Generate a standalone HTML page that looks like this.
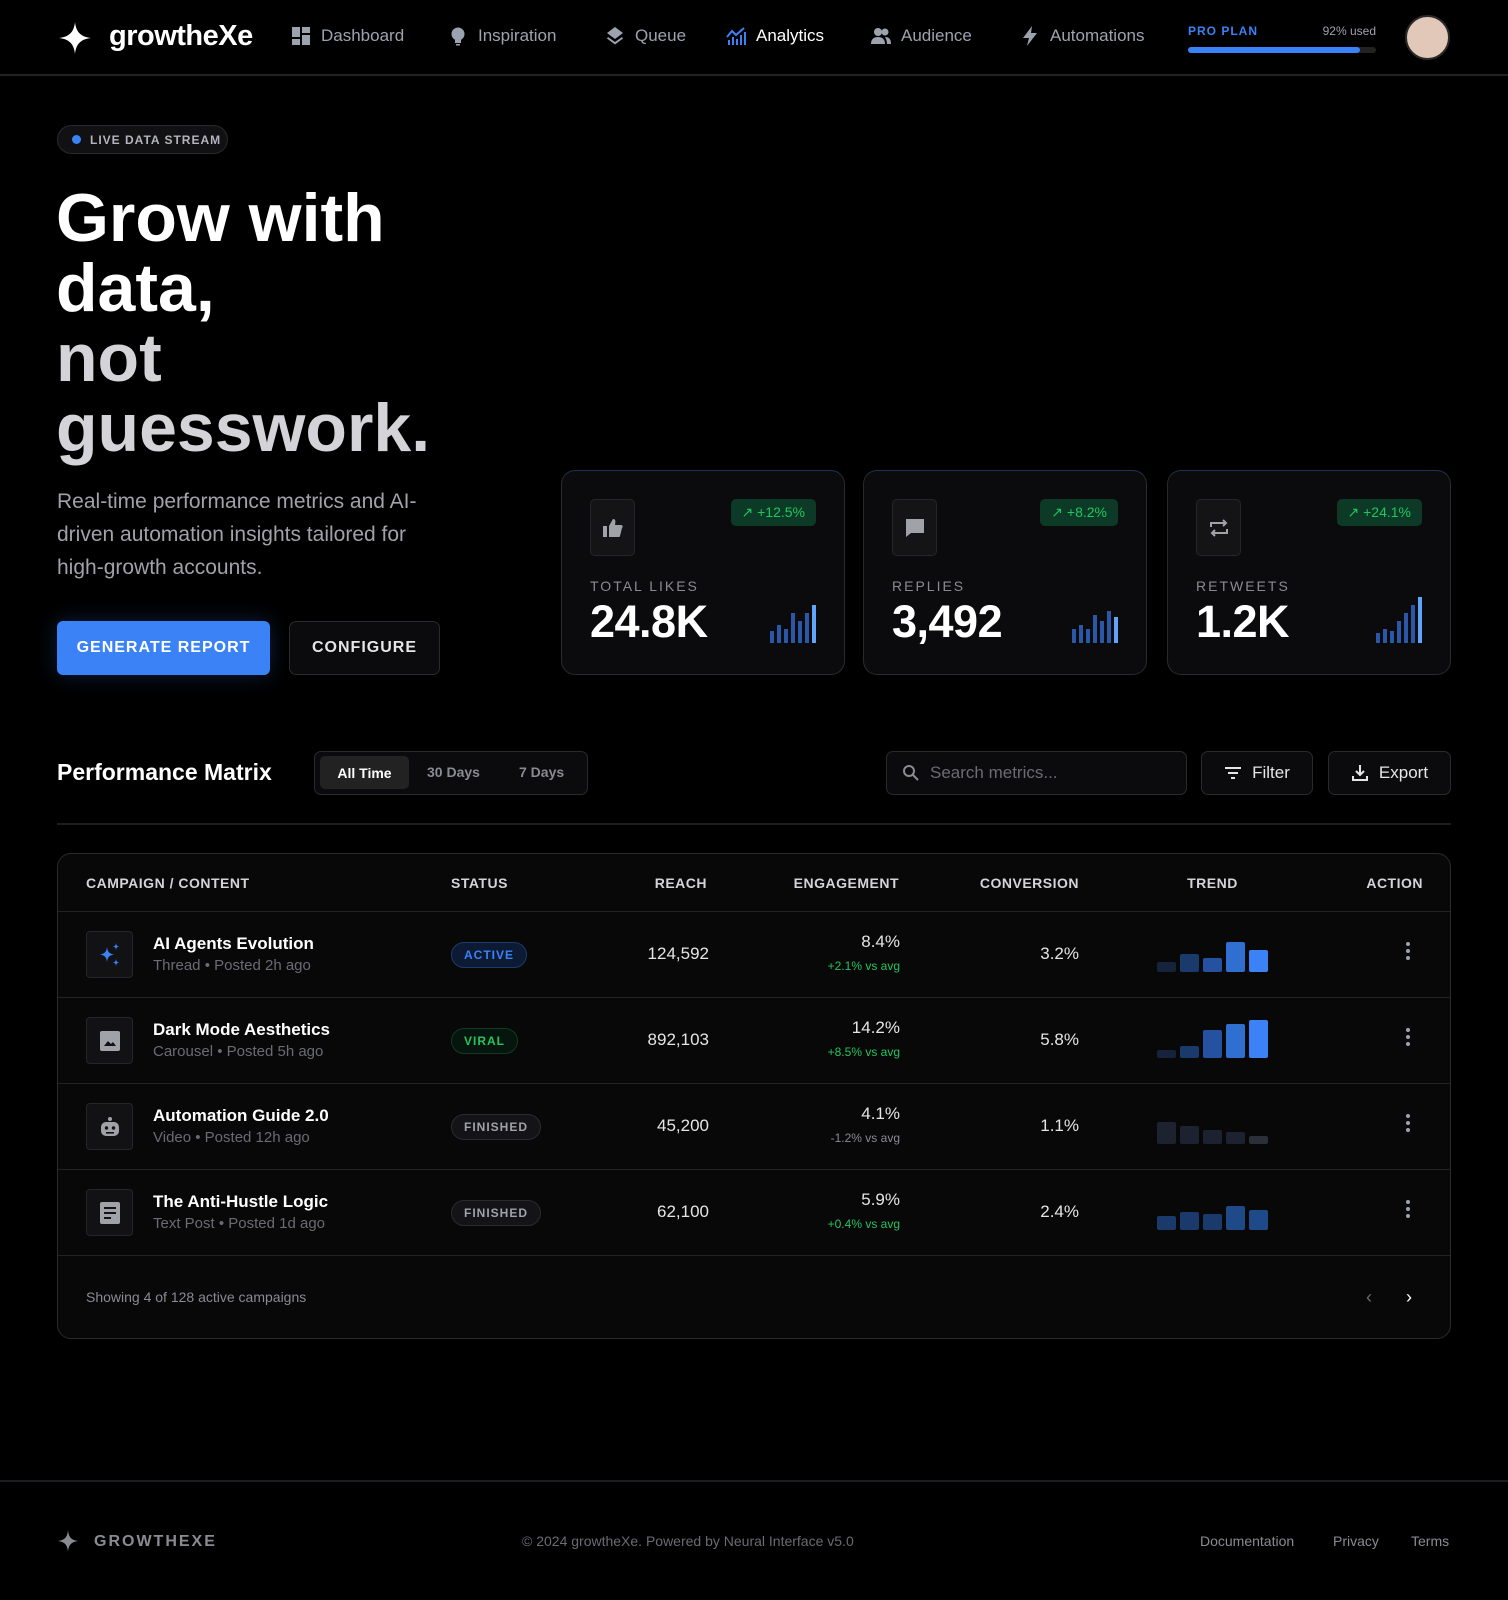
<!DOCTYPE html>
<html><head><meta charset="utf-8"><style>
*{box-sizing:border-box;margin:0;padding:0}
body{width:1508px;height:1600px;background:#000;color:#fff;font-family:"Liberation Sans",sans-serif;position:relative;overflow:hidden}
.abs{position:absolute}
.nav{position:absolute;left:0;top:0;width:1508px;height:76px;border-bottom:2px solid #222}
.ni{position:absolute;top:26px;font-size:17px;color:#9ca3af;display:flex;align-items:center;gap:10px;white-space:nowrap}
.ni svg{width:20px;height:20px}
.card{position:absolute;top:470px;width:284px;height:205px;border:1px solid #2a2a2e;border-radius:14px;background:#0b0b0d;border-top-color:#1e3350}
.ib{position:absolute;left:28px;top:28px;width:45px;height:57px;border:1px solid #26262a;border-radius:5px;background:#141417;display:flex;align-items:center;justify-content:center}
.pill{position:absolute;right:28px;top:28px;height:27px;padding:0 11px;background:#0c3a27;color:#22c55e;border-radius:5px;font-size:14px;display:flex;align-items:center;gap:6px}
.lab{position:absolute;left:28px;top:107px;font-size:14px;letter-spacing:2px;color:#8a8a92}
.val{position:absolute;left:28px;top:125px;font-size:45px;font-weight:bold;letter-spacing:-0.5px}
.bars{position:absolute;right:28px;top:134px;display:flex;align-items:flex-end;gap:3px;height:38px}
.bars i{display:block;width:4px;background:#2a57a8}
.btn{position:absolute;border:1px solid #2a2a2e;border-radius:7px;background:#0b0b0d;display:flex;align-items:center;justify-content:center;gap:10px;font-size:17px;color:#e5e5e5}
.tbl{position:absolute;left:57px;top:853px;width:1394px;height:486px;border:1px solid #2a2a2e;border-radius:14px;background:#080809;overflow:hidden}
.th{position:absolute;top:21px;font-size:14px;font-weight:bold;letter-spacing:0.5px;color:#d4d4d8}
.row{position:absolute;left:0;width:1394px;height:86px;border-top:1px solid #232327}
.ico{position:absolute;left:28px;top:19px;width:47px;height:47px;border:1px solid #26262a;border-radius:4px;background:#121215;display:flex;align-items:center;justify-content:center}
.t1{position:absolute;left:95px;top:22px;font-size:17px;font-weight:bold}
.t2{position:absolute;left:95px;top:45px;font-size:15px;color:#6b6b73}
.st{position:absolute;left:393px;top:30px;height:26px;padding:0 12px;border-radius:13px;font-size:12px;font-weight:bold;letter-spacing:1px;display:flex;align-items:center}
.num{position:absolute;font-size:17px;color:#e5e5e5;text-align:right}
.sub{position:absolute;font-size:12px;text-align:right}
.tr{position:absolute;left:1099px;display:flex;align-items:flex-end;gap:4px;top:20px;height:40px}
.tr i{display:block;width:19px;border-radius:2px}
.dots{position:absolute;left:1348px;top:30px;width:4px}
.dots b{display:block;width:4px;height:4px;border-radius:2px;background:#9ca3af;margin-bottom:3px}
</style></head><body>
<div class="nav">
 <svg class="abs" style="left:57px;top:20px" width="36" height="36" viewBox="0 0 36 36"><path d="M18 2 C19 12 24 17 34 18 C24 19 19 24 18 34 C17 24 12 19 2 18 C12 17 17 12 18 2Z" fill="#fff"/></svg>
 <div class="abs" style="left:109px;top:20px;font-size:29px;font-weight:bold;letter-spacing:-0.5px">growtheXe</div>
 <div class="ni" style="left:291px"><svg viewBox="0 0 20 20" fill="#9ca3af"><rect x="1" y="1" width="8" height="10"/><rect x="11" y="1" width="8" height="6"/><rect x="1" y="13" width="8" height="6"/><rect x="11" y="9" width="8" height="10"/></svg>Dashboard</div>
 <div class="ni" style="left:448px"><svg viewBox="0 0 20 20" fill="#9ca3af"><circle cx="10" cy="8" r="6.5"/><rect x="7" y="14" width="6" height="3"/><rect x="8" y="18" width="4" height="1.5"/></svg>Inspiration</div>
 <div class="ni" style="left:605px"><svg viewBox="0 0 20 20" fill="#9ca3af"><path d="M10 1 L18 7 L10 13 L2 7Z"/><path d="M3 11 L10 16 L17 11 L18 12.5 L10 18.5 L2 12.5Z"/></svg>Queue</div>
 <div class="ni" style="left:726px;color:#fff"><svg viewBox="0 0 20 20" fill="none" stroke="#3b82f6" stroke-width="2"><path d="M1 11 L6 5 L10 9 L18 2"/><path d="M3 19V14M7 19V11M11 19V13M15 19V9M19 19V6"/></svg>Analytics</div>
 <div class="ni" style="left:871px"><svg viewBox="0 0 20 20" fill="#9ca3af"><circle cx="7" cy="6" r="4"/><circle cx="14" cy="6" r="3.5"/><path d="M0 18c0-5 3-7 7-7s7 2 7 7z"/><path d="M14 11c4 0 6 2 6 7h-4c0-3-1-5-2-7z"/></svg>Audience</div>
 <div class="ni" style="left:1020px"><svg viewBox="0 0 20 20" fill="#9ca3af"><path d="M12 0 L3 12 H9 L7 20 L17 7 H11Z"/></svg>Automations</div>
 <div class="abs" style="left:1188px;top:24px;font-size:12px;font-weight:bold;color:#3b82f6;letter-spacing:1px">PRO PLAN</div>
 <div class="abs" style="left:1300px;top:24px;width:76px;text-align:right;font-size:12px;color:#a1a1aa">92% used</div>
 <div class="abs" style="left:1188px;top:47px;width:188px;height:6px;border-radius:3px;background:#222"><div style="width:172px;height:6px;border-radius:3px;background:#3b82f6"></div></div>
 <div class="abs" style="left:1405px;top:15px;width:45px;height:45px;border-radius:50%;background:#e2c8b8;border:2px solid #2a2a2a"></div>
</div>

<div class="abs" style="left:57px;top:125px;width:171px;height:29px;border:1px solid #2a2a2e;border-radius:15px;background:#111114;display:flex;align-items:center;gap:9px;padding-left:14px;font-size:12px;font-weight:bold;letter-spacing:1px;color:#b4b4bc"><span style="width:9px;height:9px;border-radius:50%;background:#3b82f6;display:inline-block"></span>LIVE DATA STREAM</div>
<div class="abs" style="left:56px;top:183px;font-size:68px;font-weight:bold;line-height:70px;letter-spacing:0">Grow with<br>data,<br><span style="color:#d4d4d8">not<br>guesswork.</span></div>
<div class="abs" style="left:57px;top:485px;width:470px;font-size:21px;line-height:33px;color:#a1a1aa;white-space:nowrap">Real-time performance metrics and AI-<br>driven automation insights tailored for<br>high-growth accounts.</div>
<div class="abs" style="left:57px;top:621px;width:213px;height:54px;border-radius:6px;background:#3b82f6;box-shadow:0 0 20px rgba(59,130,246,.25);display:flex;align-items:center;justify-content:center;font-size:16px;font-weight:bold;letter-spacing:1px">GENERATE REPORT</div>
<div class="btn" style="left:289px;top:621px;width:151px;height:54px;font-weight:bold;font-size:16px;letter-spacing:1px">CONFIGURE</div>

<div class="card" style="left:561px"><div class="ib"><svg width="22" height="22" viewBox="0 0 22 22" fill="#a1a1aa"><rect x="1" y="9" width="4" height="11"/><path d="M7 9 L11 2 C13 2 14 3 13 8 H19 C21 8 21 10 20 11 L18 19 C18 20 17 20 16 20 H7Z"/></svg></div><div class="pill">↗ +12.5%</div><div class="lab">TOTAL LIKES</div><div class="val">24.8K</div><div class="bars"><i style="height:12px"></i><i style="height:18px"></i><i style="height:14px"></i><i style="height:30px"></i><i style="height:22px"></i><i style="height:30px"></i><i style="height:38px;background:#60a5fa"></i></div></div>
<div class="card" style="left:863px"><div class="ib"><svg width="22" height="22" viewBox="0 0 22 22" fill="#a1a1aa"><path d="M2 2 H20 V16 H7 L2 20Z"/></svg></div><div class="pill">↗ +8.2%</div><div class="lab">REPLIES</div><div class="val">3,492</div><div class="bars"><i style="height:14px"></i><i style="height:18px"></i><i style="height:14px"></i><i style="height:28px"></i><i style="height:22px"></i><i style="height:32px"></i><i style="height:26px;background:#60a5fa"></i></div></div>
<div class="card" style="left:1167px"><div class="ib"><svg width="22" height="22" viewBox="0 0 22 22" fill="none" stroke="#a1a1aa" stroke-width="2"><path d="M3 10 V6 H18 M15 3 L18 6 L15 9"/><path d="M19 12 V16 H4 M7 13 L4 16 L7 19"/></svg></div><div class="pill">↗ +24.1%</div><div class="lab">RETWEETS</div><div class="val">1.2K</div><div class="bars"><i style="height:10px"></i><i style="height:14px"></i><i style="height:12px"></i><i style="height:22px"></i><i style="height:30px"></i><i style="height:38px"></i><i style="height:46px;background:#60a5fa"></i></div></div>

<div class="abs" style="left:57px;top:759px;font-size:23px;font-weight:bold">Performance Matrix</div>
<div class="abs" style="left:314px;top:751px;width:274px;height:44px;border:1px solid #2a2a2e;border-radius:7px;background:#0b0b0d"></div>
<div class="abs" style="left:320px;top:756px;width:89px;height:33px;border-radius:5px;background:#222;display:flex;align-items:center;justify-content:center;font-size:14px;font-weight:bold">All Time</div>
<div class="abs" style="left:427px;top:764px;font-size:14px;color:#8a8a92;font-weight:bold">30 Days</div>
<div class="abs" style="left:519px;top:764px;font-size:14px;color:#8a8a92;font-weight:bold">7 Days</div>
<div class="btn" style="left:886px;top:751px;width:301px;height:44px;justify-content:flex-start;padding-left:15px;color:#6b6b73"><svg width="18" height="18" viewBox="0 0 18 18" fill="none" stroke="#8a8a92" stroke-width="2"><circle cx="7" cy="7" r="5"/><path d="M11 11 L16 16"/></svg>Search metrics...</div>
<div class="btn" style="left:1201px;top:751px;width:112px;height:44px"><svg width="18" height="14" viewBox="0 0 18 14" stroke="#e5e5e5" stroke-width="2"><path d="M1 2H17M4 7H14M7 12H11"/></svg>Filter</div>
<div class="btn" style="left:1328px;top:751px;width:123px;height:44px"><svg width="18" height="18" viewBox="0 0 18 18" fill="none" stroke="#e5e5e5" stroke-width="2"><path d="M9 1V11M5 7L9 11L13 7M2 12V16H16V12"/></svg>Export</div>
<div class="abs" style="left:57px;top:823px;width:1394px;height:2px;background:#1e1e22"></div>

<div class="tbl">
 <div class="th" style="left:28px">CAMPAIGN / CONTENT</div>
 <div class="th" style="left:393px">STATUS</div>
 <div class="th" style="left:500px;width:149px;text-align:right">REACH</div>
 <div class="th" style="left:660px;width:181px;text-align:right">ENGAGEMENT</div>
 <div class="th" style="left:860px;width:161px;text-align:right">CONVERSION</div>
 <div class="th" style="left:1099px;width:111px;text-align:center">TREND</div>
 <div class="th" style="left:1280px;width:85px;text-align:right">ACTION</div>

 <div class="row" style="top:57px">
  <div class="ico"><svg width="26" height="26" viewBox="0 0 26 26" fill="#3b82f6"><path d="M10 5C10.7 10 12 11.5 17 12.5C12 13.5 10.7 15 10 20C9.3 15 8 13.5 3 12.5C8 11.5 9.3 10 10 5Z"/><path d="M19 1C19.4 3.5 20 4 22 4.5C20 5 19.4 5.5 19 8C18.6 5.5 18 5 16 4.5C18 4 18.6 3.5 19 1Z"/><path d="M19 17C19.4 19.5 20 20 22 20.5C20 21 19.4 21.5 19 24C18.6 21.5 18 21 16 20.5C18 20 18.6 19.5 19 17Z"/></svg></div>
  <div class="t1">AI Agents Evolution</div><div class="t2">Thread • Posted 2h ago</div>
  <div class="st" style="background:#0d1a33;border:1px solid #1e3a6b;color:#3b82f6">ACTIVE</div>
  <div class="num" style="left:500px;width:151px;top:32px">124,592</div>
  <div class="num" style="left:700px;width:142px;top:20px">8.4%</div><div class="sub" style="left:700px;width:142px;top:47px;color:#22c55e">+2.1% vs avg</div>
  <div class="num" style="left:900px;width:121px;top:32px">3.2%</div>
  <div class="tr"><i style="height:10px;background:#16233d"></i><i style="height:18px;background:#1a3a6b"></i><i style="height:14px;background:#2552a0"></i><i style="height:30px;background:#2f6fd0"></i><i style="height:22px;background:#3b82f6"></i></div>
  <div class="dots"><b></b><b></b><b></b></div>
 </div>
 <div class="row" style="top:143px">
  <div class="ico"><svg width="22" height="22" viewBox="0 0 22 22"><rect x="1" y="1" width="20" height="20" rx="2" fill="#a1a1aa"/><path d="M5 16L9 11L12 14L14 12L17 16Z" fill="#121215"/></svg></div>
  <div class="t1">Dark Mode Aesthetics</div><div class="t2">Carousel • Posted 5h ago</div>
  <div class="st" style="background:#06150e;border:1px solid #0f3b26;color:#22c55e">VIRAL</div>
  <div class="num" style="left:500px;width:151px;top:32px">892,103</div>
  <div class="num" style="left:700px;width:142px;top:20px">14.2%</div><div class="sub" style="left:700px;width:142px;top:47px;color:#22c55e">+8.5% vs avg</div>
  <div class="num" style="left:900px;width:121px;top:32px">5.8%</div>
  <div class="tr"><i style="height:8px;background:#16233d"></i><i style="height:12px;background:#1a3a6b"></i><i style="height:28px;background:#2552a0"></i><i style="height:34px;background:#2f6fd0"></i><i style="height:38px;background:#3b82f6"></i></div>
  <div class="dots"><b></b><b></b><b></b></div>
 </div>
 <div class="row" style="top:229px">
  <div class="ico"><svg width="24" height="24" viewBox="0 0 24 24" fill="#a1a1aa"><circle cx="12" cy="4" r="2"/><rect x="3" y="7" width="18" height="14" rx="5"/><circle cx="8.5" cy="13" r="1.7" fill="#121215"/><circle cx="15.5" cy="13" r="1.7" fill="#121215"/><rect x="8" y="17" width="8" height="1.6" fill="#121215"/></svg></div>
  <div class="t1">Automation Guide 2.0</div><div class="t2">Video • Posted 12h ago</div>
  <div class="st" style="background:#141418;border:1px solid #2a2a30;color:#a1a1aa">FINISHED</div>
  <div class="num" style="left:500px;width:151px;top:32px">45,200</div>
  <div class="num" style="left:700px;width:142px;top:20px">4.1%</div><div class="sub" style="left:700px;width:142px;top:47px;color:#8a8a92">-1.2% vs avg</div>
  <div class="num" style="left:900px;width:121px;top:32px">1.1%</div>
  <div class="tr"><i style="height:22px;background:#1c2230"></i><i style="height:18px;background:#1c2230"></i><i style="height:14px;background:#1c2230"></i><i style="height:12px;background:#1c2230"></i><i style="height:8px;background:#2a2f3a"></i></div>
  <div class="dots"><b></b><b></b><b></b></div>
 </div>
 <div class="row" style="top:315px">
  <div class="ico"><svg width="22" height="24" viewBox="0 0 22 24"><rect x="1" y="1" width="20" height="22" rx="2" fill="#a1a1aa"/><path d="M5 7H17M5 12H17M5 17H12" stroke="#121215" stroke-width="2"/></svg></div>
  <div class="t1">The Anti-Hustle Logic</div><div class="t2">Text Post • Posted 1d ago</div>
  <div class="st" style="background:#141418;border:1px solid #2a2a30;color:#a1a1aa">FINISHED</div>
  <div class="num" style="left:500px;width:151px;top:32px">62,100</div>
  <div class="num" style="left:700px;width:142px;top:20px">5.9%</div><div class="sub" style="left:700px;width:142px;top:47px;color:#22c55e">+0.4% vs avg</div>
  <div class="num" style="left:900px;width:121px;top:32px">2.4%</div>
  <div class="tr"><i style="height:14px;background:#1a3a6b"></i><i style="height:18px;background:#1a3a6b"></i><i style="height:16px;background:#1a3a6b"></i><i style="height:24px;background:#1e4a8a"></i><i style="height:20px;background:#1e4a8a"></i></div>
  <div class="dots"><b></b><b></b><b></b></div>
 </div>
 <div class="row" style="top:401px;height:85px">
  <div class="abs" style="left:28px;top:33px;font-size:14px;color:#8a8a92">Showing 4 of 128 active campaigns</div>
  <div class="abs" style="left:1308px;top:31px;font-size:18px;color:#6b6b73">‹</div>
  <div class="abs" style="left:1348px;top:31px;font-size:18px;color:#fff">›</div>
 </div>
</div>

<div class="abs" style="left:0;top:1480px;width:1508px;height:2px;background:#1e1e22"></div>
<svg class="abs" style="left:57px;top:1530px" width="22" height="22" viewBox="0 0 22 22"><path d="M11 0C11.6 7 14 10 21 11C14 12 11.6 15 11 22C10.4 15 8 12 1 11C8 10 10.4 7 11 0Z" fill="#8a8a92"/></svg>
<div class="abs" style="left:94px;top:1533px;font-size:16px;font-weight:bold;letter-spacing:2px;color:#8a8a92">GROWTHEXE</div>
<div class="abs" style="left:522px;top:1533px;font-size:14px;color:#6b6b73">© 2024 growtheXe. Powered by Neural Interface v5.0</div>
<div class="abs" style="left:1200px;top:1533px;font-size:14px;color:#8a8a92">Documentation</div>
<div class="abs" style="left:1333px;top:1533px;font-size:14px;color:#8a8a92">Privacy</div>
<div class="abs" style="left:1411px;top:1533px;font-size:14px;color:#8a8a92">Terms</div>
</body></html>
